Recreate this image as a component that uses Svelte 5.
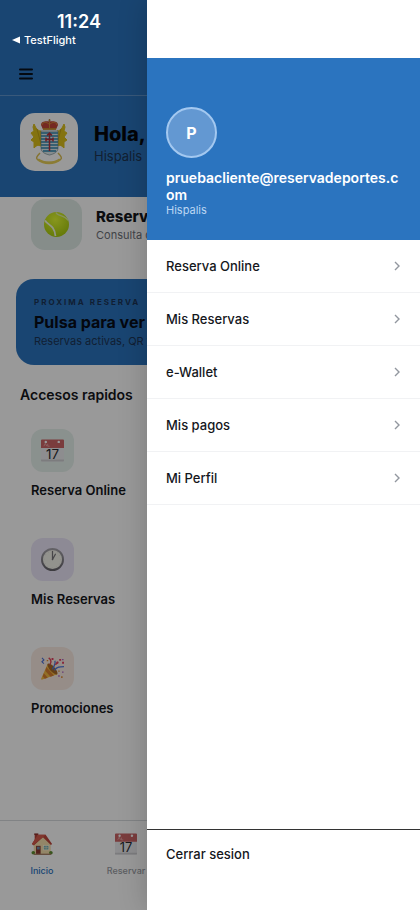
<script>
  const shortcuts = [
    { label: 'Reserva Online', icon: 'calendar', tint: '#e6f2ed' },
    { label: 'Mis Reservas', icon: 'clock', tint: '#ece6f9' },
    { label: 'Promociones', icon: 'party', tint: '#fbece3' }
  ];
  const tabs = [
    { label: 'Inicio', icon: 'house', active: true },
    { label: 'Reservar', icon: 'calendar', active: false }
  ];
  const menu = ['Reserva Online', 'Mis Reservas', 'e-Wallet', 'Mis pagos', 'Mi Perfil'];
</script>

{#snippet picture(name)}
  {#if name === 'calendar'}
    <svg viewBox="0 0 24 24" aria-hidden="true">
      <path d="M0 2h24v20.500a1 1 0 0 1-1 1H1a1 1 0 0 1-1-1z" fill="#ececef" />
      <path d="M0 1.500a1 1 0 0 1 1-1h22a1 1 0 0 1 1 1V9.500H0z" fill="#cb6466" />
      <path d="M3 7.500l1.500-3L6 7.500M7 5v2.500h2" stroke="#eeb0b0" stroke-width=".8" fill="none" />
      <circle cx="5" cy="3" r="1.300" fill="#fff" /><circle cx="18.500" cy="3" r="1.300" fill="#fff" />
      <path d="M0 21.500h24v1a1 1 0 0 1-1 1H1a1 1 0 0 1-1-1z" fill="#cfcfd3" />
      <text x="12" y="21" text-anchor="middle" font-size="14" font-weight="400" fill="#2b2b2f">17</text>
    </svg>
  {:else if name === 'clock'}
    <svg viewBox="0 0 24 24" aria-hidden="true">
      <defs>
        <linearGradient id="rim" x2="0" y2="1">
          <stop offset="0" stop-color="#a5a3aa" /><stop offset="1" stop-color="#67656c" />
        </linearGradient>
      </defs>
      <circle cx="12" cy="12" r="11" fill="#f4f3ec" stroke="url(#rim)" stroke-width="2" />
      <circle cx="12" cy="12" r="8.800" fill="none" stroke="#c4c2bd" stroke-width=".8" stroke-dasharray=".6 4" />
      <path d="M12 3.500V12M12 12l3-5.500" stroke="#77767a" stroke-width="1.300" stroke-linecap="round" />
      <circle cx="12" cy="12" r=".8" fill="#77767a" />
    </svg>
  {:else if name === 'party'}
    <svg viewBox="0 0 24 24" aria-hidden="true">
      <path d="M7 7c5 1 9 6 10 11L1.500 23.500C0 24 0 23 .5 22z" fill="#f4b942" />
      <path d="M5.500 10.500l8 8.800-3.500 1.300-5.500-6.100zM3 17l4 4.700-3 1-2.200-2.700z" fill="#d77e31" />
      <ellipse cx="12" cy="12.500" rx="2.600" ry="7.300" transform="rotate(-42 12 12.500)" fill="#a76a28" />
      <path d="M12 13c1-4 4-5 2.500-9M14 14c2-4 6-4 10-4" fill="none" stroke="#5279da" stroke-width="1.400" />
      <path d="M9 8c2-2 2-5-1-7M15 8l3-3" fill="none" stroke="#e54454" stroke-width="1.500" />
      <path d="M1 1l2 2-2 2 2 2" fill="none" stroke="#4b70d8" stroke-width="1.200" />
      <path d="M11 1h2v2h-2zM19 2h2v2h-2zM16 5h2v2h-2zM22 5h2v2h-2z" fill="#e33e60" />
      <path d="M6 3h1.500v1.500H6zM18 14h1.500v1.500H18zM21 20h1.500v2H21z" fill="#e18a31" />
      <path d="M22 2h1.500v1.500H22zM22 15h1.500v1.500H22zM18 19h1.500v1.500H18z" fill="#a55bc5" />
    </svg>
  {:else if name === 'house'}
    <svg viewBox="0 0 24 24" aria-hidden="true">
      <path d="M4 1h3.500v8H4z" fill="#b54038" /><path d="M3.500.5h4.500v1.500H3.500z" fill="#8b302d" />
      <path d="M3 11l9-8 9.500 8v12H3z" fill="#f6dfae" />
      <path d="M1 12L7.500 2H16l7 10-1.300 1L13 4.500 3 13.500z" fill="#bf463c" />
      <path d="M7.500 2H16l-3 2.500L2.500 13 1 12z" fill="#d65a4b" />
      <path d="M5.500 14h5v9h-5z" fill="#8a3830" /><path d="M6.500 15h3v3h-3z" fill="#6b8dab" />
      <path d="M13 13h7v6h-7z" fill="#fff4d3" /><path d="M14 14h5v4h-5z" fill="#72b0b9" />
      <path d="M16.500 14v4M14 16h5" stroke="#e8e1c1" stroke-width=".7" />
      <circle cx="2.500" cy="21.500" r="2" fill="#5e8e31" /><circle cx="21.700" cy="21.500" r="2" fill="#5e8e31" />
      <path d="M3 22.500h19V24H3z" fill="#a98269" />
    </svg>
  {:else if name === 'ball'}
    <svg viewBox="0 0 24 24" aria-hidden="true">
      <defs>
        <radialGradient id="felt" cx=".45" cy=".3" r=".7">
          <stop offset="0" stop-color="#e2fb32" /><stop offset="1" stop-color="#a9cc10" />
        </radialGradient>
      </defs>
      <circle cx="12" cy="12" r="12" fill="url(#felt)" />
      <path d="M1 8C3 12.500 10 12 11 23" fill="none" stroke="#f4fbe5" stroke-width="1.700" />
      <path d="M11.500.5c1 3.500 8.500 2.500 11.500 7.500" fill="none" stroke="#dff2a0" stroke-width="1.200" />
    </svg>
  {/if}
{/snippet}

<div class="app">
  <div class="home">
    <header>
      <div class="topbar">
        <button class="burger" aria-label="Menu">
          <svg viewBox="0 0 14 12" aria-hidden="true"><path d="M1 1.500h12M1 6h12M1 10.500h12" stroke="#08101c" stroke-width="2" stroke-linecap="round" /></svg>
        </button>
      </div>
      <div class="hero">
        <div class="crest">
          <svg viewBox="0 0 38 46" aria-hidden="true">
            <path d="M10 34c-3 3-4 5-3 6 6 4.500 18 4.500 24 0 1-1 0-3-3-6" fill="none" stroke="#ddc052" stroke-width="1.500" />
            <path d="M8 40.500c6 4.500 16 4.500 22 0" fill="none" stroke="#e8cf57" stroke-width="2.600" />
            <path d="M4 5l2 4c2 2 3 3 5 3v15c-3-1-4-1-7 2v-6l-3-2 3-3-3-4 3-2-1-4zM34 5l-2 4c-2 2-3 3-5 3v15c3-1 4-1 7 2v-6l3-2-3-3 3-4-3-2 1-4z" fill="#dcc01c" stroke="#dcc01c" stroke-width="1" />
            <path d="M7 10l4 15M31 10l-4 15" stroke="#b89a14" stroke-width=".8" />
            <path d="M11 12h17v17c0 4-4 6-8.500 7C15 35 11 33 11 29z" fill="#dfeaec" />
            <path d="M11 14h17M11 17h17M11 20h17M11 23h17M11 26h17M11 29h17M13 32h13" stroke="#2f86b0" stroke-width="1.700" />
            <path d="M11 12h17v17c0 4-4 6-8.500 7C15 35 11 33 11 29z" fill="none" stroke="#647d87" stroke-width=".6" />
            <path d="M19.500 14v18M17 16.500l2.500-2.500 2.500 2.500M16 20.500h7M16 18.500v4M23 18.500v4" fill="none" stroke="#b52f3b" stroke-width="1.500" />
            <path d="M13 10.500L11 6c0-4 5-4 8.500-3.500C23 2 28 2 28 6l-2 4.500z" fill="#c4453a" />
            <path d="M12 6c1-4 5-3 7.500-.5C22 3 26 2 27 6M19.500 9V3" fill="none" stroke="#d7a03c" stroke-width=".8" />
            <path d="M13 10h13" stroke="#c5962d" stroke-width="1.600" /><path d="M19.500 0v3M18.300 1.200h2.400" stroke="#b27a37" stroke-width=".9" />
          </svg>
        </div>
        <div>
          <h1>Hola,</h1>
          <p class="club">Hispalis</p>
        </div>
      </div>
    </header>

    <main>
      <div class="feature">
        <div class="tile big">{@render picture('ball')}</div>
        <div>
          <h2>Reserva</h2>
          <p>Consulta disponibilidad</p>
        </div>
      </div>
      <section class="next">
        <p class="eyebrow">PROXIMA RESERVA</p>
        <h2>Pulsa para ver</h2>
        <p class="detail">Reservas activas, QR y</p>
      </section>
      <h3>Accesos rapidos</h3>
      <div class="shortcuts">
        {#each shortcuts as item}
          <button class="shortcut">
            <span class="tile" style:background={item.tint}>{@render picture(item.icon)}</span>
            <span>{item.label}</span>
          </button>
        {/each}
      </div>
    </main>

    <nav class="tabs">
      {#each tabs as tab}
        <button class:active={tab.active}>
          {@render picture(tab.icon)}
          <span>{tab.label}</span>
        </button>
      {/each}
    </nav>
  </div>

  <div class="scrim"></div>

  <div class="status">
    <span class="time">11:24</span>
    <a class="back" href="#testflight">
      <svg viewBox="0 0 8 8" aria-hidden="true"><path d="M0 4L8 .500v7z" fill="#fff" /></svg>
      TestFlight
    </a>
  </div>

  <aside>
    <div class="profile">
      <div class="avatar">P</div>
      <p class="email">pruebacliente@reservadeportes.com</p>
      <p class="place">Hispalis</p>
    </div>
    <nav class="menu">
      {#each menu as label}
        <a href="#menu">
          <span>{label}</span>
          <svg viewBox="0 0 6 10" aria-hidden="true"><path d="M1 1l4 4-4 4" fill="none" stroke="#92979f" stroke-width="1.400" /></svg>
        </a>
      {/each}
    </nav>
    <button class="logout">Cerrar sesion</button>
  </aside>
</div>

<style>
  .app { position: relative; min-height: 100vh; overflow: hidden; background: #fff; color: #15171c; font-family: Inter, "Liberation Sans", sans-serif; }
  h1, h2, h3, p { margin: 0; white-space: nowrap; }
  button { padding: 0; border: 0; background: none; color: inherit; font: inherit; text-align: left; }
  a { color: inherit; text-decoration: none; }
  svg { display: block; flex: none; }

  .home { display: flex; flex-direction: column; min-height: 100vh; }
  header { background: #2b74bf; }
  .topbar { box-sizing: border-box; height: 96px; padding: 64px 16px 0; border-bottom: 1px solid #5f94cd; }
  .burger { display: grid; place-items: center; width: 20px; height: 20px; }
  .burger svg { width: 14px; height: 12px; }
  .hero { display: flex; gap: 16px; padding: 17px 20px 26px; }
  .crest { display: grid; place-items: center; width: 58px; height: 58px; border-radius: 15px; background: #fff; }
  .crest svg { width: 38px; height: 46px; }
  h1 { margin-top: 8px; font-size: 20px; line-height: 26px; font-weight: 800; color: #06080d; }
  .club { font-size: 13px; line-height: 18px; color: #1e3452; }

  main { flex: 1; }
  .feature { display: flex; gap: 14px; padding: 2px 31px 0; }
  .tile { display: grid; place-items: center; width: 43px; height: 43px; border-radius: 12px; }
  .tile svg { width: 23px; height: 23px; }
  .tile.big { flex: none; width: 51px; height: 51px; border-radius: 14px; background: #dfebe6; }
  .tile.big svg { width: 25px; height: 25px; }
  .feature h2 { margin-top: 8px; font-size: 15px; line-height: 20px; font-weight: 800; }
  .feature p { font-size: 11px; line-height: 16px; color: #6d7178; }
  .next { margin: 29px 16px 0; padding: 16px 18px; border-radius: 18px; background: #2b74bf; }
  .eyebrow { font-size: 8px; line-height: 14px; font-weight: 700; letter-spacing: 2px; color: #1c3556; }
  .next h2 { margin-top: 1px; font-size: 16px; line-height: 24px; font-weight: 700; color: #070d18; }
  .detail { font-size: 11px; line-height: 15px; color: #1c3556; }
  h3 { margin: 20px 20px 0; font-size: 14px; line-height: 20px; font-weight: 600; }
  .shortcuts { display: flex; flex-direction: column; gap: 38px; padding: 24px 31px; }
  .shortcut { display: flex; flex-direction: column; gap: 8px; font-size: 13px; line-height: 20px; font-weight: 600; }

  .tabs { display: grid; grid-template-columns: repeat(5, 1fr); box-sizing: border-box; height: 90px; padding-top: 12px; border-top: 1px solid #d8dade; font-size: 9px; line-height: 12px; font-weight: 500; color: #9a9da4; }
  .tabs button { display: flex; flex-direction: column; align-items: center; gap: 10px; }
  .tabs svg { width: 22px; height: 22px; }
  .tabs .active { color: #2b74bf; }

  .scrim { position: absolute; inset: 0; background: rgba(0, 0, 0, .4); }
  .status { position: absolute; top: 11px; left: 12px; display: flex; flex-direction: column; color: #fff; }
  .time { padding-left: 45px; font-size: 18px; line-height: 21px; font-weight: 600; }
  .back { display: flex; align-items: center; gap: 4px; font-size: 11px; line-height: 16px; font-weight: 500; }
  .back svg { width: 8px; height: 8px; }

  aside { position: absolute; inset: 0 0 0 35%; display: flex; flex-direction: column; box-sizing: border-box; padding-top: 58px; background: #fff; box-shadow: 0 0 28px rgba(0, 0, 0, .2); }
  .profile { padding: 49px 19px 22px; background: #2b74bf; color: #fff; }
  .avatar { display: grid; place-items: center; box-sizing: border-box; width: 51px; height: 51px; margin-bottom: 11px; border: 2px solid #a3c8f0; border-radius: 50%; background: #6398d2; font-size: 16px; font-weight: 700; }
  .email { font-size: 14px; line-height: 17px; font-weight: 600; white-space: normal; word-break: break-all; }
  .place { font-size: 11px; line-height: 15px; color: #bcd7f3; }
  .menu { flex: 1; }
  .menu a { display: flex; align-items: center; justify-content: space-between; box-sizing: border-box; height: 53px; padding: 0 20px 0 19px; border-bottom: 1px solid #f1f2f4; font-size: 13px; font-weight: 500; }
  .menu svg { width: 6px; height: 10px; }
  .logout { display: flex; align-items: flex-start; box-sizing: border-box; height: 81px; padding: 16px 19px; border-top: 1px solid #333; font-size: 13px; line-height: 16px; font-weight: 500; }
</style>
